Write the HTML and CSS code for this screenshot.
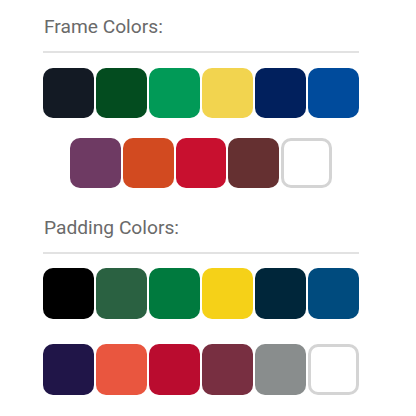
FILE: index.html
```html
<!DOCTYPE html>
<html>
<head>
<meta charset="utf-8">
<link rel="stylesheet" href="styles.css">
</head>
<body>
<div class="panel">
  <section class="group frame">
    <h3 class="title">Frame Colors:</h3>
    <div class="rule"></div>
    <div class="swatches">
      <span class="sw c-black-navy"></span>
      <span class="sw c-dark-green"></span>
      <span class="sw c-kelly"></span>
      <span class="sw c-yellow"></span>
      <span class="sw c-navy"></span>
      <span class="sw c-royal"></span>
      <span class="sw c-purple"></span>
      <span class="sw c-orange"></span>
      <span class="sw c-red"></span>
      <span class="sw c-brown"></span>
      <span class="sw c-white"></span>
    </div>
  </section>
  <section class="group padding">
    <h3 class="title">Padding Colors:</h3>
    <div class="rule"></div>
    <div class="swatches">
      <span class="sw p-black"></span>
      <span class="sw p-hunter"></span>
      <span class="sw p-green"></span>
      <span class="sw p-yellow"></span>
      <span class="sw p-navy"></span>
      <span class="sw p-blue"></span>
      <span class="sw p-purple"></span>
      <span class="sw p-orange"></span>
      <span class="sw p-red"></span>
      <span class="sw p-maroon"></span>
      <span class="sw p-grey"></span>
      <span class="sw p-white"></span>
    </div>
  </section>
</div>
</body>
</html>
```
FILE: styles.css
```css
html, body {
  margin: 0;
  padding: 0;
  background: #ffffff;
}

.panel {
  width: 316px;
  margin-left: 43px;
  padding-top: 15.2px;
  font-family: Roboto, "Liberation Sans", sans-serif;
}

.title {
  margin: 0 0 0 1px;
  font-size: 19.2px;
  line-height: 24px;
  font-weight: 400;
  color: #6a6a6a;
}

.rule {
  margin-top: 12px;
  height: 2px;
  background: #e2e2e2;
}

.swatches {
  margin-top: 14.4px;
  display: flex;
  flex-wrap: wrap;
  justify-content: center;
  column-gap: 2.1px;
}

.frame .swatches {
  row-gap: 19.5px;
}

.padding {
  margin-top: 27.6px;
}

.padding .swatches {
  row-gap: 25.5px;
}

.sw {
  display: block;
  width: 50.8px;
  height: 50.5px;
  border-radius: 10px;
  box-sizing: border-box;
}

.c-black-navy { background: #131a24; }
.c-dark-green { background: #034c1f; }
.c-kelly { background: #019a57; }
.c-yellow { background: #f2d44f; }
.c-navy { background: #01205d; }
.c-royal { background: #004b9c; }
.c-purple { background: #6e3a63; }
.c-orange { background: #d24a20; }
.c-red { background: #c8102f; }
.c-brown { background: #653031; }
.c-white { background: #ffffff; border: 3px solid #d4d4d4; }

.p-black { background: #000000; }
.p-hunter { background: #2a6141; }
.p-green { background: #007a3e; }
.p-yellow { background: #f5d118; }
.p-navy { background: #00263a; }
.p-blue { background: #004b7e; }
.p-purple { background: #201548; }
.p-orange { background: #e9563f; }
.p-red { background: #ba0c2f; }
.p-maroon { background: #782f41; }
.p-grey { background: #898d8d; }
.p-white { background: #ffffff; border: 3px solid #d4d4d4; }
```
